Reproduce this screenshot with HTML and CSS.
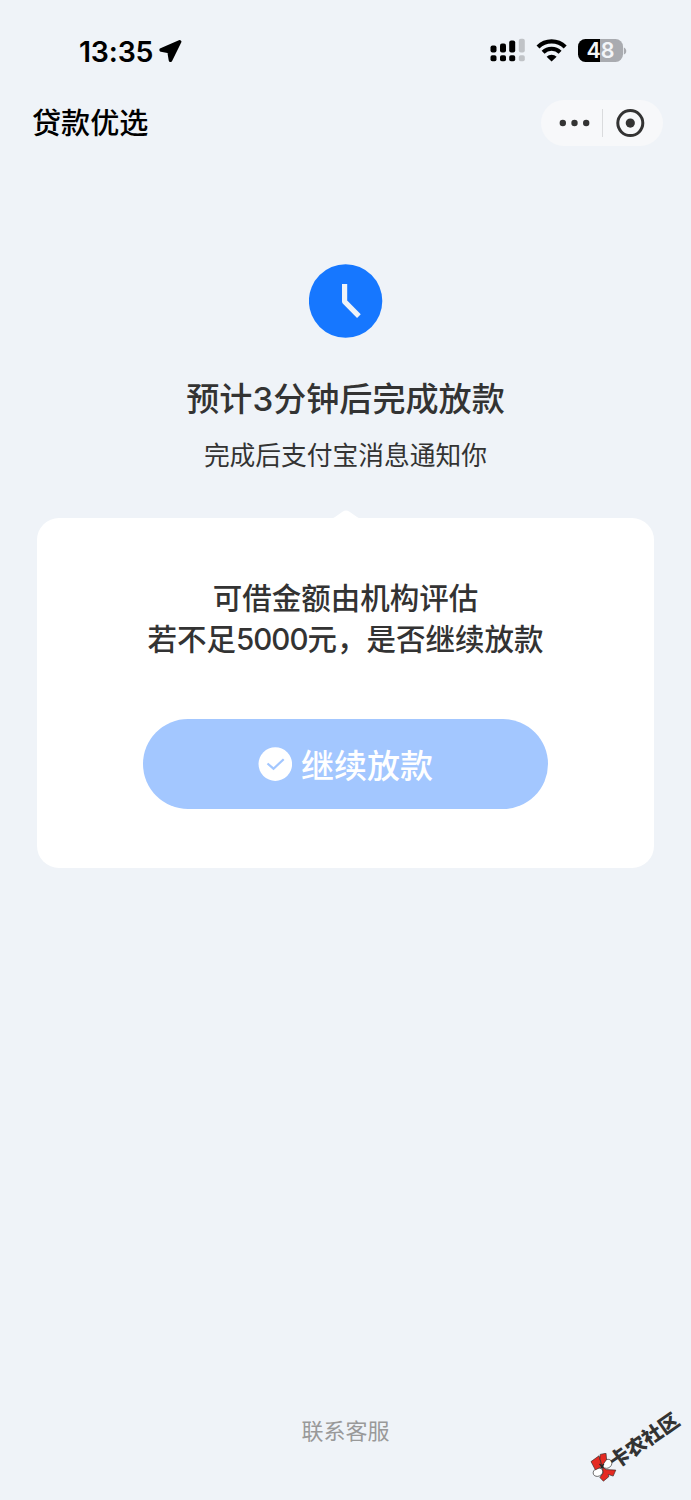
FILE: index.html
```html
<!DOCTYPE html>
<html lang="zh-CN">
<head>
<meta charset="utf-8">
<title>贷款优选</title>
<link rel="stylesheet" href="styles.css">
</head>
<body>
<div class="page">
  <header class="status">
    <div class="status-left">
      <span class="time">13:35</span>
      <svg class="location" width="24" height="24" viewBox="0 0 24 24"><path d="M20.6 2.8 2.2 10.9l7.9 1.7 1.4 8.5Z" stroke="#000" stroke-width="3.6" stroke-linejoin="round"/></svg>
    </div>
    <div class="status-right">
      <svg class="signal" width="36" height="24" viewBox="0 0 36 24">
        <g class="bar-on"><rect x="0.5" y="7.5" width="6" height="7" rx="2"/><rect x="10" y="5.5" width="6" height="9" rx="2"/><rect x="19.2" y="2.5" width="6" height="12" rx="2"/><rect x="0.5" y="17.3" width="6" height="6" rx="1.8"/><rect x="10" y="17.3" width="6" height="6" rx="1.8"/><rect x="19.2" y="17.3" width="6" height="6" rx="1.8"/></g>
        <g class="bar-off"><rect x="28.8" y="0.8" width="6" height="13.7" rx="2"/><rect x="28.8" y="17.3" width="6" height="6" rx="1.8"/></g>
      </svg>
      <svg class="wifi" width="32" height="24" viewBox="0 0 32 24"><path d="M2 8.9a19.3 19.3 0 0 1 27.2 0M7.1 14.2a12.2 12.2 0 0 1 17 0" fill="none" stroke="#000" stroke-width="4.2"/><path d="M10.6 18.7a7.2 7.2 0 0 1 10 0L15.6 23.5Z"/></svg>
      <div class="battery"><span class="level">48</span><svg width="4" height="8" viewBox="0 0 4 8"><path d="M.8.4C4.1 1.5 4.1 6.5.8 7.6Z" fill="#a9abb0"/></svg></div>
    </div>
  </header>
  <nav class="navbar">
    <h1 class="nav-title">贷款优选</h1>
    <div class="capsule">
      <svg width="122" height="46" viewBox="0 0 122 46"><g fill="#333"><circle cx="21.8" cy="23" r="3.2"/><circle cx="33.5" cy="23" r="3.2"/><circle cx="45.2" cy="23" r="3.2"/><circle cx="89.3" cy="23.1" r="4.6"/></g><path d="M61.5 9v28" stroke="#dadbdd"/><circle cx="89.3" cy="23.1" r="12.5" fill="none" stroke="#333" stroke-width="3"/></svg>
    </div>
  </nav>
  <main class="main">
    <svg class="clock" width="74" height="74" viewBox="0 0 74 74"><circle cx="36.6" cy="37" r="36.7" fill="#1677ff"/><path d="M35.6 20v17.6l14.3 14.5" fill="none" stroke="#eff3f8" stroke-width="5.2" stroke-linejoin="round"/></svg>
    <h2 class="headline">预计3分钟后完成放款</h2>
    <p class="subtitle">完成后支付宝消息通知你</p>
    <section class="card">
      <svg class="card-tip" width="32" height="9" viewBox="0 0 32 9"><path d="M0 9Q3 8.5 5 7L12.5 1.7Q16-.8 19.5 1.7L27 7Q29 8.5 32 9Z" fill="#fff"/></svg>
      <p class="question">可借金额由机构评估<br>若不足<span class="amount">5000</span>元，是否继续放款</p>
      <button class="confirm" type="button">
        <svg width="34" height="34" viewBox="0 0 34 34"><circle cx="17.3" cy="17.1" r="16.8" fill="#fff"/><path d="m9.5 16.5 6 5.2 10.2-9.5" fill="none" stroke="#a3c7ff" stroke-width="2.2"/></svg>
        <span>继续放款</span>
      </button>
    </section>
  </main>
  <footer class="footer">联系客服</footer>
  <div class="watermark">
    <svg width="28" height="30" viewBox="0 0 28 30"><g stroke="#252525" stroke-width=".6" stroke-linejoin="round"><g fill="#fff"><ellipse cx="17.2" cy="10.8" rx="5" ry="4.2" transform="rotate(-38 17.2 10.8)"/><ellipse cx="8" cy="19.2" rx="5" ry="4" transform="rotate(-25 8 19.2)"/></g><g fill="#e52a22"><path d="m1 8.6 8-5.8 3.2 10.5-6.8 3.6Z"/><path d="m10.2 1.4 5.8-1.2.6 6.3-4.5 6.3-2.2-7Z"/><path d="m12.2 14 4 2.6 9.6.5-2.6 6-4.9-1.6.5 2.2-5.4 4.5-3.5-3.6 3.3-4.8Z"/></g></g><path d="m9.5 11 4 4M10.8 15.4l3-4.2" stroke="#252525" stroke-width="1.4"/></svg>
    <span class="watermark-text">卡农社区</span>
  </div>
</div>
</body>
</html>
```

FILE: styles.css
```css
* { box-sizing: border-box; }
body {
  margin: 0;
  background: #eff3f8;
  color: #333;
  font-family: Inter, "Noto Sans CJK SC", sans-serif;
}
h1, h2, p { margin: 0; font-weight: 500; }
svg { display: block; flex: none; }
.page {
  position: relative;
  display: flex;
  flex-direction: column;
  height: 1500px;
  overflow: hidden;
}
.status {
  display: flex;
  justify-content: space-between;
  height: 100px;
  padding: 0 64px 0 79px;
  color: #000;
}
.status-left { display: flex; padding-top: 35px; }
.time { width: 80px; font-size: 28.5px; line-height: 34px; font-weight: 600; letter-spacing: -0.2px; white-space: nowrap; }
.location { margin-top: 4px; }
.status-right { display: flex; padding-top: 38px; }
.bar-off { fill: #c0c3c7; }
.wifi { margin-left: 10px; }
.battery { display: flex; align-items: center; height: 24px; margin-left: 10px; padding-top: 1px; }
.level {
  width: 45px;
  height: 23px;
  border-radius: 7.5px;
  background: linear-gradient(90deg, #000 22px, #a9abb0 22px);
  color: #f3f5f8;
  font-size: 21.5px;
  font-weight: 600;
  line-height: 23px;
  text-align: center;
}
.navbar {
  display: flex;
  align-items: center;
  justify-content: space-between;
  height: 46px;
  padding: 0 28px 0 32px;
}
.nav-title { padding-top: 2px; color: #000; font-size: 29.1px; line-height: 46px; }
.capsule { border-radius: 23px; background: #f7f8fa; }
.main { display: flex; flex-direction: column; align-items: center; padding-top: 118px; }
.headline { margin-top: 36px; font-size: 33.1px; line-height: 50px; }
.subtitle { margin-top: 12px; font-size: 25.75px; font-weight: 400; line-height: 40px; }
.card {
  position: relative;
  display: flex;
  flex-direction: column;
  align-items: center;
  width: 617px;
  height: 350px;
  margin-top: 42px;
  padding-top: 60px;
  border-radius: 22px;
  background: #fff;
}
.card-tip { position: absolute; top: -8px; left: 292.5px; }
.question { font-size: 29.5px; line-height: 41px; text-align: center; }
.amount { letter-spacing: -1px; }
.confirm {
  display: flex;
  align-items: center;
  justify-content: center;
  gap: 9px;
  width: 405px;
  height: 90px;
  margin-top: 59px;
  padding: 0;
  border: 0;
  border-radius: 45px;
  background: #a3c7ff;
  color: #fff;
  font: 500 33px/50px "Noto Sans CJK SC", sans-serif;
}
.footer { margin-top: auto; padding-bottom: 53px; color: #999; font-size: 22px; font-weight: 400; line-height: 32px; text-align: center; }
.watermark { position: absolute; left: 590px; top: 1453px; display: flex; }
.watermark-text {
  position: absolute;
  left: 21px;
  top: -2px;
  color: #333;
  font: 900 20px/24px "Noto Sans CJK SC", sans-serif;
  white-space: nowrap;
  transform: rotate(-35deg);
  transform-origin: 0 50%;
}
```
